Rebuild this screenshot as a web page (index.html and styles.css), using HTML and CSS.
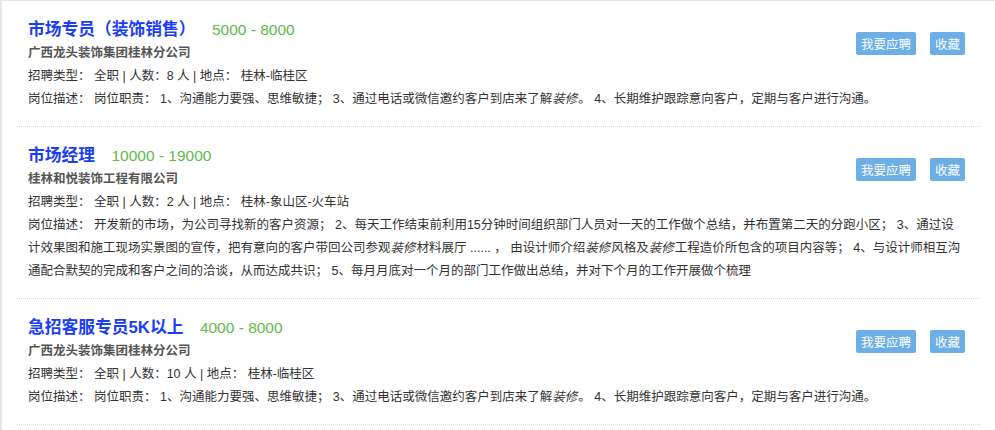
FILE: index.html
```html
<!DOCTYPE html>
<html lang="zh-CN">
<head>
    <meta charset="UTF-8">
    <meta name="viewport" content="width=device-width, initial-scale=1.0">
    <title>职位列表</title>
    <link rel="stylesheet" href="styles.css">
</head>
<body>

    <div class="job-list">

        <!-- 职位 1 -->
        <div class="job">
            <div class="job-head">
                <div class="job-info">
                    <div class="job-title">
                        <span class="name">市场专员（装饰销售）</span>
                        <span class="salary">5000 - 8000</span>
                    </div>
                    <div class="company">广西龙头装饰集团桂林分公司</div>
                    <div class="meta">招聘类型： 全职 | 人数：8 人 | 地点： 桂林-临桂区</div>
                </div>
                <div class="actions">
                    <button class="btn">我要应聘</button>
                    <button class="btn">收藏</button>
                </div>
            </div>
            <div class="desc">岗位描述： 岗位职责： 1、沟通能力要强、思维敏捷； 3、通过电话或微信邀约客户到店来了解<em>装修</em>。 4、长期维护跟踪意向客户，定期与客户进行沟通。</div>
        </div>

        <!-- 职位 2 -->
        <div class="job">
            <div class="job-head">
                <div class="job-info">
                    <div class="job-title">
                        <span class="name">市场经理</span>
                        <span class="salary">10000 - 19000</span>
                    </div>
                    <div class="company">桂林和悦装饰工程有限公司</div>
                    <div class="meta">招聘类型： 全职 | 人数：2 人 | 地点： 桂林-象山区-火车站</div>
                </div>
                <div class="actions">
                    <button class="btn">我要应聘</button>
                    <button class="btn">收藏</button>
                </div>
            </div>
            <div class="desc">岗位描述： 开发新的市场，为公司寻找新的客户资源； 2、每天工作结束前利用15分钟时间组织部门人员对一天的工作做个总结，并布置第二天的分跑小区； 3、通过设计效果图和施工现场实景图的宣传，把有意向的客户带回公司参观<em>装修</em>材料展厅 ...... ， 由设计师介绍<em>装修</em>风格及<em>装修</em>工程造价所包含的项目内容等； 4、与设计师相互沟通配合默契的完成和客户之间的洽谈，从而达成共识； 5、每月月底对一个月的部门工作做出总结，并对下个月的工作开展做个梳理</div>
        </div>

        <!-- 职位 3 -->
        <div class="job">
            <div class="job-head">
                <div class="job-info">
                    <div class="job-title">
                        <span class="name">急招客服专员5K以上</span>
                        <span class="salary">4000 - 8000</span>
                    </div>
                    <div class="company">广西龙头装饰集团桂林分公司</div>
                    <div class="meta">招聘类型： 全职 | 人数：10 人 | 地点： 桂林-临桂区</div>
                </div>
                <div class="actions">
                    <button class="btn">我要应聘</button>
                    <button class="btn">收藏</button>
                </div>
            </div>
            <div class="desc">岗位描述： 岗位职责： 1、沟通能力要强、思维敏捷； 3、通过电话或微信邀约客户到店来了解<em>装修</em>。 4、长期维护跟踪意向客户，定期与客户进行沟通。</div>
        </div>

    </div>

</body>
</html>
```

FILE: styles.css
```css
body {
    font-family: 'Liberation Sans', 'Noto Sans CJK SC', sans-serif;
    background-color: #fff;
    margin: 0;
    padding: 0;
    color: #333;
}

.job-list {
    border-left: 2px solid #e6e6e6;
    border-top: 1px solid #e6e6e6;
    padding: 0 15px;
    height: 430px;
    overflow: hidden;
}

.job {
    padding: 17px 15px 15px 11px;
    border-bottom: 1px dotted #d6d6d6;
}

.job-head {
    display: flex;
    justify-content: space-between;
    align-items: flex-start;
}

.job-title {
    line-height: 24px;
    white-space: nowrap;
}

.job-title .name {
    font-size: 16.75px;
    font-weight: bold;
    color: #1b3ef5;
}

.job-title .salary {
    font-size: 15.5px;
    color: #62b94a;
    margin-left: 12px;
}

.company {
    font-size: 12.5px;
    font-weight: bold;
    color: #555;
    line-height: 23px;
}

.meta,
.desc {
    font-size: 12.5px;
    line-height: 23px;
}

.desc em {
    font-style: italic;
    margin-right: 1px;
}

.actions {
    display: flex;
    gap: 14px;
    margin-top: 14px;
}

.btn {
    font-family: inherit;
    font-size: 12.5px;
    height: 23px;
    padding: 0 5px;
    background-color: #6caee6;
    color: white;
    border: none;
    border-radius: 2px;
    cursor: pointer;
}

.btn:hover {
    background-color: #5a9fd9;
}
```
